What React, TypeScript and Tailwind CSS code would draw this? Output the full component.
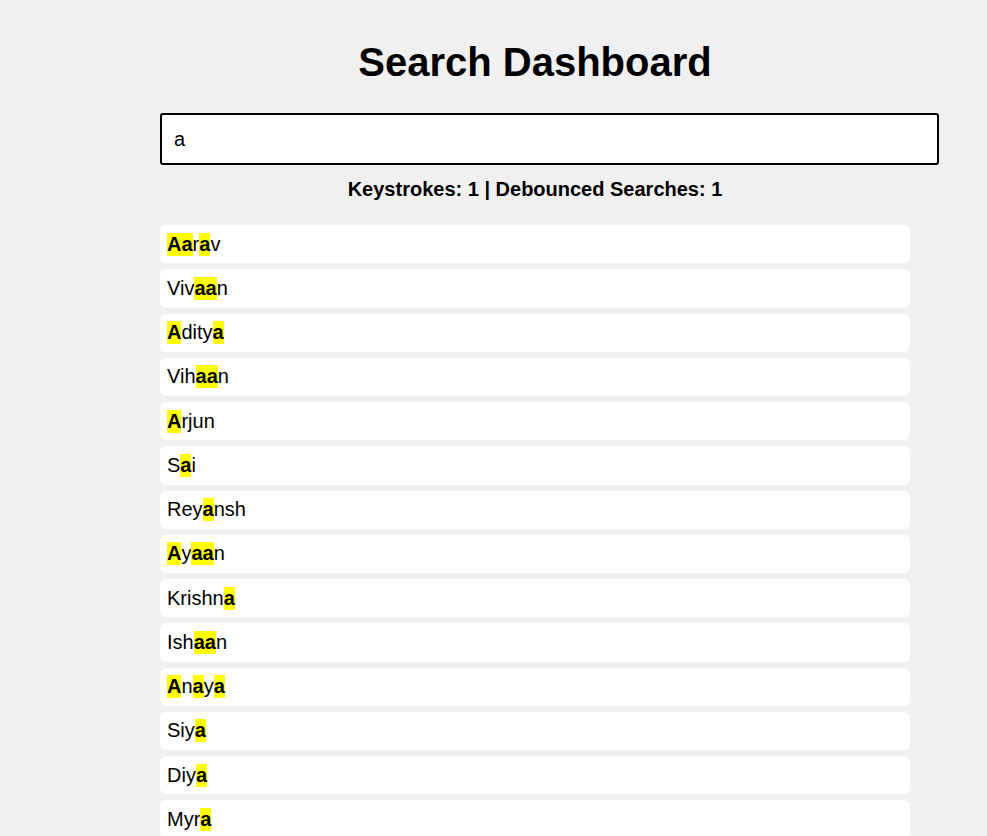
import React from "react";

const names = [
  "Aarav",
  "Vivaan",
  "Aditya",
  "Vihaan",
  "Arjun",
  "Sai",
  "Reyansh",
  "Ayaan",
  "Krishna",
  "Ishaan",
  "Anaya",
  "Siya",
  "Diya",
  "Myra",
];

const Highlight = ({ text, query }: { text: string; query: string }) => {
  const parts = text.split(new RegExp(`(${query})`, "gi"));
  return (
    <>
      {parts.map((part, i) =>
        part.toLowerCase() === query.toLowerCase() ? (
          <mark key={i} className="bg-[#ffff00] font-bold text-black">
            {part}
          </mark>
        ) : (
          <span key={i}>{part}</span>
        )
      )}
    </>
  );
};

const App = () => {
  const query = "a";

  return (
    <div className="min-h-screen bg-[#f0f0f0] font-['Liberation_Sans',Arial,sans-serif] text-black">
      <div className="ml-[160px] w-[750px] pt-[39px]">
        <h1 className="text-center text-[40px] font-bold leading-[46px]">
          Search Dashboard
        </h1>
        <input
          readOnly
          value={query}
          className="mt-[28px] box-border h-[52px] w-[779px] rounded-[3px] border-2 border-black bg-white px-3 text-[20px] leading-[23px] outline-none"
        />
        <p className="mt-[13px] text-center text-[20px] font-bold leading-[23px]">
          Keystrokes: 1 | Debounced Searches: 1
        </p>
        <ul className="mt-[24px] flex flex-col gap-[6px]">
          {names.map((name) => (
            <li
              key={name}
              className="flex h-[38.25px] items-center rounded-md bg-white pl-[7px] text-[20px] leading-[23px]"
            >
              <Highlight text={name} query={query} />
            </li>
          ))}
        </ul>
      </div>
    </div>
  );
};

export default App;
